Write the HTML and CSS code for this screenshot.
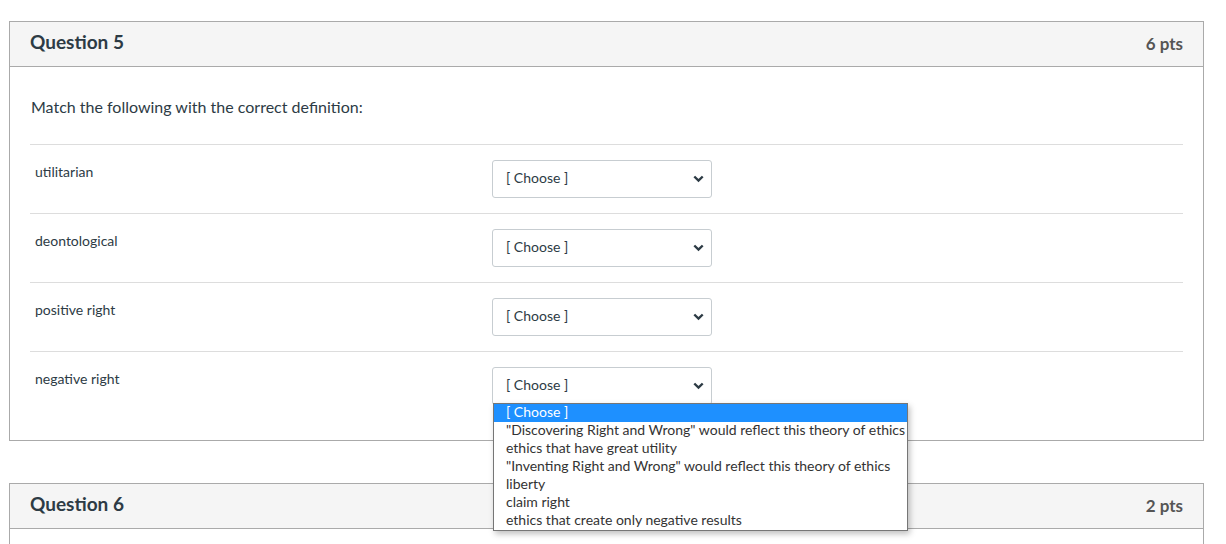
FILE: index.html
```html
<!DOCTYPE html>
<html>
<head>
<meta charset="utf-8">
<link rel="stylesheet" href="styles.css">
</head>
<body>
<div class="page">
  <div class="question">
    <div class="q-header">
      <span class="q-title">Question 5</span>
      <span class="q-points">6 pts</span>
    </div>
    <div class="q-body">
      <div class="q-text">Match the following with the correct definition:</div>
      <div class="match-row">
        <div class="match-label">utilitarian</div>
        <div class="select-wrap"><div class="select"><span>[ Choose ]</span><svg class="chev" width="11" height="8" viewBox="0 0 11 8"><path d="M1.3 1.5 L5.5 5.6 L9.7 1.5" fill="none" stroke="#2d3b45" stroke-width="2.4"/></svg></div></div>
      </div>
      <div class="match-row">
        <div class="match-label">deontological</div>
        <div class="select-wrap"><div class="select"><span>[ Choose ]</span><svg class="chev" width="11" height="8" viewBox="0 0 11 8"><path d="M1.3 1.5 L5.5 5.6 L9.7 1.5" fill="none" stroke="#2d3b45" stroke-width="2.4"/></svg></div></div>
      </div>
      <div class="match-row">
        <div class="match-label">positive right</div>
        <div class="select-wrap"><div class="select"><span>[ Choose ]</span><svg class="chev" width="11" height="8" viewBox="0 0 11 8"><path d="M1.3 1.5 L5.5 5.6 L9.7 1.5" fill="none" stroke="#2d3b45" stroke-width="2.4"/></svg></div></div>
      </div>
      <div class="match-row">
        <div class="match-label">negative right</div>
        <div class="select-wrap"><div class="select"><span>[ Choose ]</span><svg class="chev" width="11" height="8" viewBox="0 0 11 8"><path d="M1.3 1.5 L5.5 5.6 L9.7 1.5" fill="none" stroke="#2d3b45" stroke-width="2.4"/></svg></div>
          <ul class="dropdown">
            <li class="active">[ Choose ]</li>
            <li>"Discovering Right and Wrong" would reflect this theory of ethics</li>
            <li>ethics that have great utility</li>
            <li>"Inventing Right and Wrong" would reflect this theory of ethics</li>
            <li>liberty</li>
            <li>claim right</li>
            <li>ethics that create only negative results</li>
          </ul>
        </div>
      </div>
    </div>
  </div>
  <div class="question q6">
    <div class="q-header">
      <span class="q-title">Question 6</span>
      <span class="q-points">2 pts</span>
    </div>
    <div class="q-body"></div>
  </div>
</div>
</body>
</html>
```

FILE: styles.css
```css
html, body {
  margin: 0;
  padding: 0;
  background: #fff;
  font-family: Lato, "Noto Sans", sans-serif;
  color: #2d3b45;
}
.page {
  padding: 21px 22px 0 9px;
}
.question {
  border: 1px solid #aaaaaa;
  background: #fff;
}
.q6 {
  margin-top: 42px;
}
.q-header {
  box-sizing: border-box;
  height: 45px;
  background: #f5f5f5;
  border-bottom: 1px solid #aaaaaa;
  display: flex;
  align-items: center;
  justify-content: space-between;
  padding: 0 20px 5px 20px;
}
.q-title {
  font-size: 19px;
  line-height: 24px;
  font-weight: 700;
  color: #2d3b45;
}
.q-points {
  font-size: 17px;
  line-height: 24px;
  font-weight: 700;
  color: #555555;
  margin-top: 4px;
}
.q-body {
  padding: 0 20px 20px 20px;
}
.q6 .q-body {
  height: 30px;
  padding: 0;
}
.q-text {
  padding-top: 29px;
  font-size: 16px;
  line-height: 22px;
  padding-left: 1px;
  padding-bottom: 26px;
}
.match-row {
  display: flex;
  border-top: 1px solid #dddddd;
  padding: 15px 0;
}
.match-label {
  width: 457px;
  padding-left: 5px;
  flex-shrink: 0;
  font-size: 14px;
  line-height: 20px;
  padding-top: 2px;
}
.select-wrap {
  position: relative;
}
.select {
  box-sizing: border-box;
  width: 220px;
  height: 38px;
  border: 1px solid #c7cdd1;
  border-radius: 3px;
  display: flex;
  align-items: center;
  justify-content: space-between;
  padding: 0 7px 4px 13px;
  font-size: 14px;
  color: #2d3b45;
  background: #fff;
}
.chev {
  display: block;
  margin-top: 4px;
}
.dropdown {
  position: absolute;
  top: 36px;
  left: 1px;
  z-index: 10;
  margin: 0;
  padding: 0;
  list-style: none;
  width: 415px;
  box-sizing: border-box;
  border: 1px solid #767676;
  background: #fff;
  box-shadow: 2px 3px 6px rgba(0,0,0,0.25);
}
.dropdown li {
  font-size: 14px;
  line-height: 15px;
  height: 15px;
  padding: 0 0 3px 12px;
  color: #333;
  white-space: nowrap;
}
.dropdown li.active {
  background: #1e90ff;
  color: #fff;
}
```
